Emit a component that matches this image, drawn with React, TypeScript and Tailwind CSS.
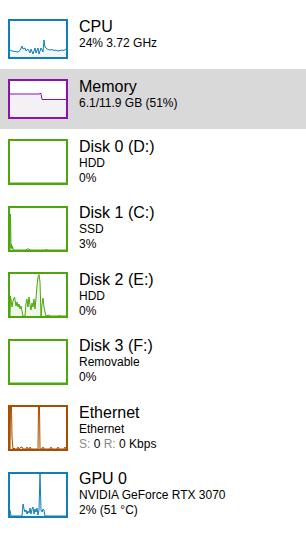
import React from 'react';

type Graph = {
  color: string;
  fill: string;
  points: string;
};

interface PerfRow {
  title: string;
  lines: React.ReactNode[];
  graph: Graph;
  selected?: boolean;
}

const BLUE = '#117dbb';
const GREEN = '#4da60c';

const rows: PerfRow[] = [
  {
    title: 'CPU',
    lines: ['24% 3.72 GHz'],
    graph: {
      color: BLUE,
      fill: '#f1f6fa',
      points:
        '0,29 2,30 5,30.5 8,31 10,29.5 12,25 13,28 15,27 16,30 18,28 20,32 21,28 23,33 25,27 26,32 28,27 29,33 31,27 33,31 34,19 35,26 36,27 38,28.5 40,29 42,28.5 44,29.5 46,29 48,30 50,29.5 52,29 54,29.5 56,28',
    },
  },
  {
    title: 'Memory',
    lines: ['6.1/11.9 GB (51%)'],
    selected: true,
    graph: {
      color: '#8b12ae',
      fill: '#f3f1f4',
      points: '0,13 29,13 30,12.5 31,12.5 32,18.5 56,18.5',
    },
  },
  {
    title: 'Disk 0 (D:)',
    lines: ['HDD', '0%'],
    graph: { color: GREEN, fill: '#eff7e8', points: '0,42 56,42' },
  },
  {
    title: 'Disk 1 (C:)',
    lines: ['SSD', '3%'],
    graph: {
      color: GREEN,
      fill: '#eff7e8',
      points: '0,42 0.5,6 1,40 1.5,36 2,41 2.5,38 3,42 16,42 17,41 19,41 20,42 36,42 36.5,41 37,42 56,42',
    },
  },
  {
    title: 'Disk 2 (E:)',
    lines: ['HDD', '0%'],
    graph: {
      color: GREEN,
      fill: '#eff7e8',
      points:
        '0,42 0.5,22 2,33 3,27 4.5,23 6,32 7,28 8,33 9,30 10,35 11,32 12,37 13,42 15,42 16,29 17,25 18,33 19,23 20,31 21,36 22,29 23,33 24,25 25,35 26,24 27,12 28,3 29,0.5 30,8 31,42 32,30 33,24 34,33 35,38 36,42 39,41 40,42 49,42 49.5,41 50,42 56,42',
    },
  },
  {
    title: 'Disk 3 (F:)',
    lines: ['Removable', '0%'],
    graph: { color: GREEN, fill: '#eff7e8', points: '0,42 56,42' },
  },
  {
    title: 'Ethernet',
    lines: [
      'Ethernet',
      <>
        <span className="text-[#8a8a8a]">S:</span> 0 <span className="text-[#8a8a8a]">R:</span> 0 Kbps
      </>,
    ],
    graph: {
      color: '#a74f01',
      fill: '#fcf2ea',
      points:
        '0,42 0.5,0 1.5,0 2,30 3,42 4,41 5,42 7,42 8,40 9,42 11,40 12,40 13,42 16,42 17,40 18,42 19,42 20,40 21,42 28,42 28.5,0 29.5,0 30,42 32,42 33,40 34,42 40,42 41,40 42,42 47,42 48,40 49,42 54,42 55,40 56,42',
    },
  },
  {
    title: 'GPU 0',
    lines: ['NVIDIA GeForce RTX 3070', '2% (51 °C)'],
    graph: {
      color: BLUE,
      fill: '#f1f6fa',
      points:
        '0,36 1,42 12,42 13,30 14,35 15,38 16,36 17,40 18,37 19,39 20,34 21,40 22,35 23,33 24,40 25,35 26,38 27,34 28,41 29,36 30,0 31,36 32,38 33,35 34,36 35,42 56,42',
    },
  },
];

const Thumb: React.FC<{ graph: Graph; tall: boolean }> = ({ graph, tall }) => {
  const h = tall ? 42 : 36;
  return (
    <div
      className={`shrink-0 w-[60px] border-2 bg-white ${tall ? 'h-[46px]' : 'h-[40px]'}`}
      style={{ borderColor: graph.color }}
    >
      <svg width="56" height={h} viewBox={`0 0 56 ${h}`} className="block">
        <polygon points={`0,${h} ${graph.points} 56,${h}`} fill={graph.fill} />
        <polyline points={graph.points} fill="none" stroke={graph.color} strokeWidth="1" strokeLinejoin="round" />
      </svg>
    </div>
  );
};

export default function App() {
  return (
    <div className="min-h-screen bg-white pt-[9px] font-['Segoe_UI','Liberation_Sans',Arial,sans-serif] text-black">
      {rows.map((row) => (
        <div
          key={row.title}
          className={`flex items-start gap-[11px] py-[10px] pl-[8px] ${row.selected ? 'bg-[#d9d9d9]' : ''}`}
        >
          <Thumb graph={row.graph} tall={row.lines.length > 1} />
          <div className="-mt-[1.5px]">
            <div className="text-[16px] leading-[18px]">{row.title}</div>
            {row.lines.map((line, i) => (
              <div key={i} className="text-[12px] leading-[15px]">
                {line}
              </div>
            ))}
          </div>
        </div>
      ))}
    </div>
  );
}
